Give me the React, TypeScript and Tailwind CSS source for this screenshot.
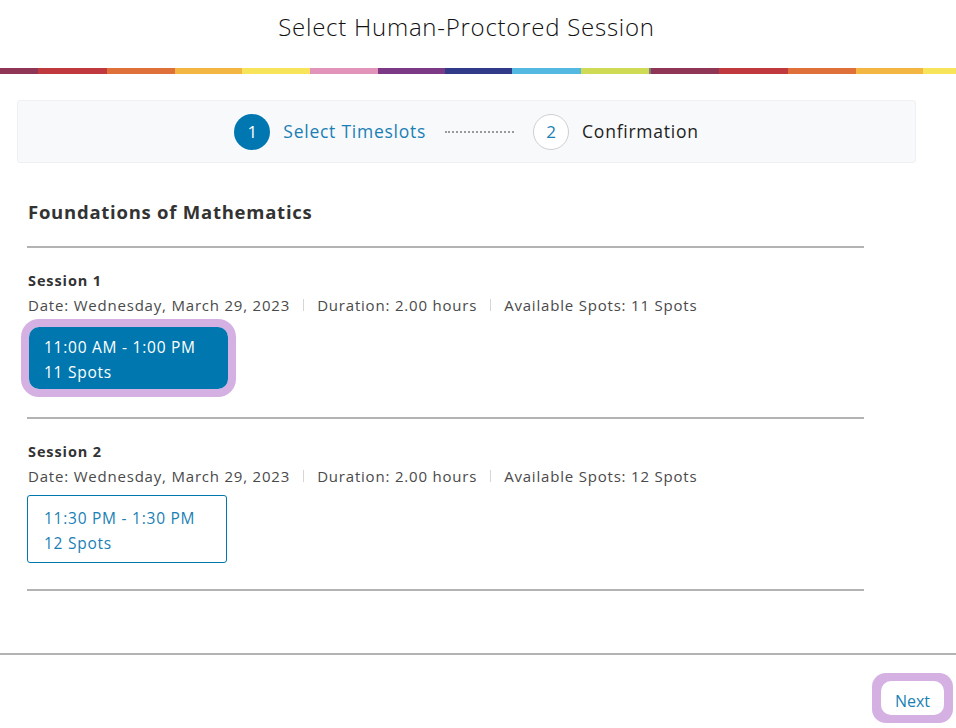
import React from "react";

const bar: [string, number][] = [
  ["#8f3657", 38],
  ["#c0393f", 69],
  ["#e0703a", 68],
  ["#f4b643", 67],
  ["#f8e45a", 68],
  ["#e293b9", 68],
  ["#7c3985", 67],
  ["#323a8a", 67],
  ["#54b9e0", 69],
  ["#cfdb55", 68],
  ["#7a7a7a", 2],
  ["#8f3657", 68],
  ["#c0393f", 69],
  ["#e0703a", 68],
  ["#f4b643", 67],
  ["#f8e45a", 33],
];

function Sep() {
  return <span className="mx-[13px] inline-block h-[12px] w-px bg-[#d6d6d6] align-middle" />;
}

function Details({ spots }: { spots: string }) {
  return (
    <div className="mt-[5px] flex items-center text-[15px] leading-[20px] text-[#4a4a4a] tracking-[0.8px]">
      <span>Date: Wednesday, March 29, 2023</span>
      <Sep />
      <span>Duration: 2.00 hours</span>
      <Sep />
      <span>Available Spots: {spots}</span>
    </div>
  );
}

export default function App() {
  return (
    <div className="h-[728px] w-[956px] overflow-hidden bg-white" style={{ fontFamily: '"Open Sans", "Noto Sans", sans-serif' }}>
      <div className="flex h-[52px] items-center justify-center pr-[23px] pt-[1px]">
        <h1 className="text-[24px] font-light text-[#111] tracking-[0.75px]">Select Human-Proctored Session</h1>
      </div>
      <div className="mt-[16px] flex h-[6px]">
        {bar.map(([c, w], i) => (
          <div key={i} className="h-full shrink-0" style={{ backgroundColor: c, width: w }} />
        ))}
      </div>
      <div className="mx-[17px] mt-[26px] flex h-[63px] w-[899px] items-center justify-center rounded-[3px] border border-[#eef0f3] bg-[#f8f9fb]">
        <div className="flex items-center">
          <div className="flex h-[36px] w-[36px] items-center justify-center rounded-full bg-[#0077b0] text-[17px] text-white">1</div>
          <span className="ml-[13px] text-[17.5px] text-[#1a7fb5] tracking-[0.75px]">Select Timeslots</span>
          <div className="ml-[19px] w-[69px] border-t-2 border-dotted border-[#9a9a9a]" />
          <div className="ml-[19px] flex h-[36px] w-[36px] items-center justify-center rounded-full border border-[#cfcfcf] bg-white text-[17px] text-[#1a7fb5]">2</div>
          <span className="ml-[13px] text-[17.5px] text-[#222] tracking-[0.75px]">Confirmation</span>
        </div>
      </div>

      <div className="ml-[27px] w-[837px]">
        <h2 className="mt-[37px] pl-[1px] text-[18.5px] font-bold leading-[24px] text-[#333] tracking-[0.75px]">Foundations of Mathematics</h2>
        <div className="mt-[22px] h-[2px] bg-[#b3b3b3]" />

        <div className="pl-[1px] pt-[24px]">
          <div className="text-[14.5px] font-bold leading-[18px] text-[#333] tracking-[0.9px]">Session 1</div>
          <Details spots="11 Spots" />
          <div className="ml-[1px] mt-[12px] inline-block rounded-[10px] ring-[8px] ring-[#d4b0e3]">
            <div className="flex h-[62px] w-[199px] flex-col justify-center rounded-[10px] bg-[#0077ae] pl-[15px] pt-[3px] text-[15.5px] leading-[25px] text-white tracking-[0.75px]">
              <span>11:00 AM - 1:00 PM</span>
              <span>11 Spots</span>
            </div>
          </div>
        </div>
        <div className="mt-[28px] h-[2px] bg-[#b3b3b3]" />

        <div className="pt-[24px]">
          <div className="pl-[1px] text-[14.5px] font-bold leading-[18px] text-[#333] tracking-[0.9px]">Session 2</div>
          <div className="pl-[1px]">
            <Details spots="12 Spots" />
          </div>
          <div className="mt-[9px] flex h-[68px] w-[200px] flex-col justify-center rounded-[3px] border border-[#0077ae] pl-[16px] pt-[3px] text-[15.5px] leading-[25px] text-[#1a7fb5] tracking-[0.75px]">
            <span>11:30 PM - 1:30 PM</span>
            <span>12 Spots</span>
          </div>
        </div>
        <div className="mt-[26px] h-[2px] bg-[#b3b3b3]" />
      </div>

      <div className="mt-[62px] h-[2px] bg-[#b3b3b3]" />
      <div className="flex justify-end pr-[3px] pt-[18px]">
        <div className="flex h-[50px] w-[81px] items-center justify-center rounded-[14px] bg-[#d4b0e3]">
          <div className="flex h-[34px] w-[63px] items-center justify-center rounded-[10px] bg-white pt-[6px] text-[16px] text-[#1a7fb5]">Next</div>
        </div>
      </div>
    </div>
  );
}
